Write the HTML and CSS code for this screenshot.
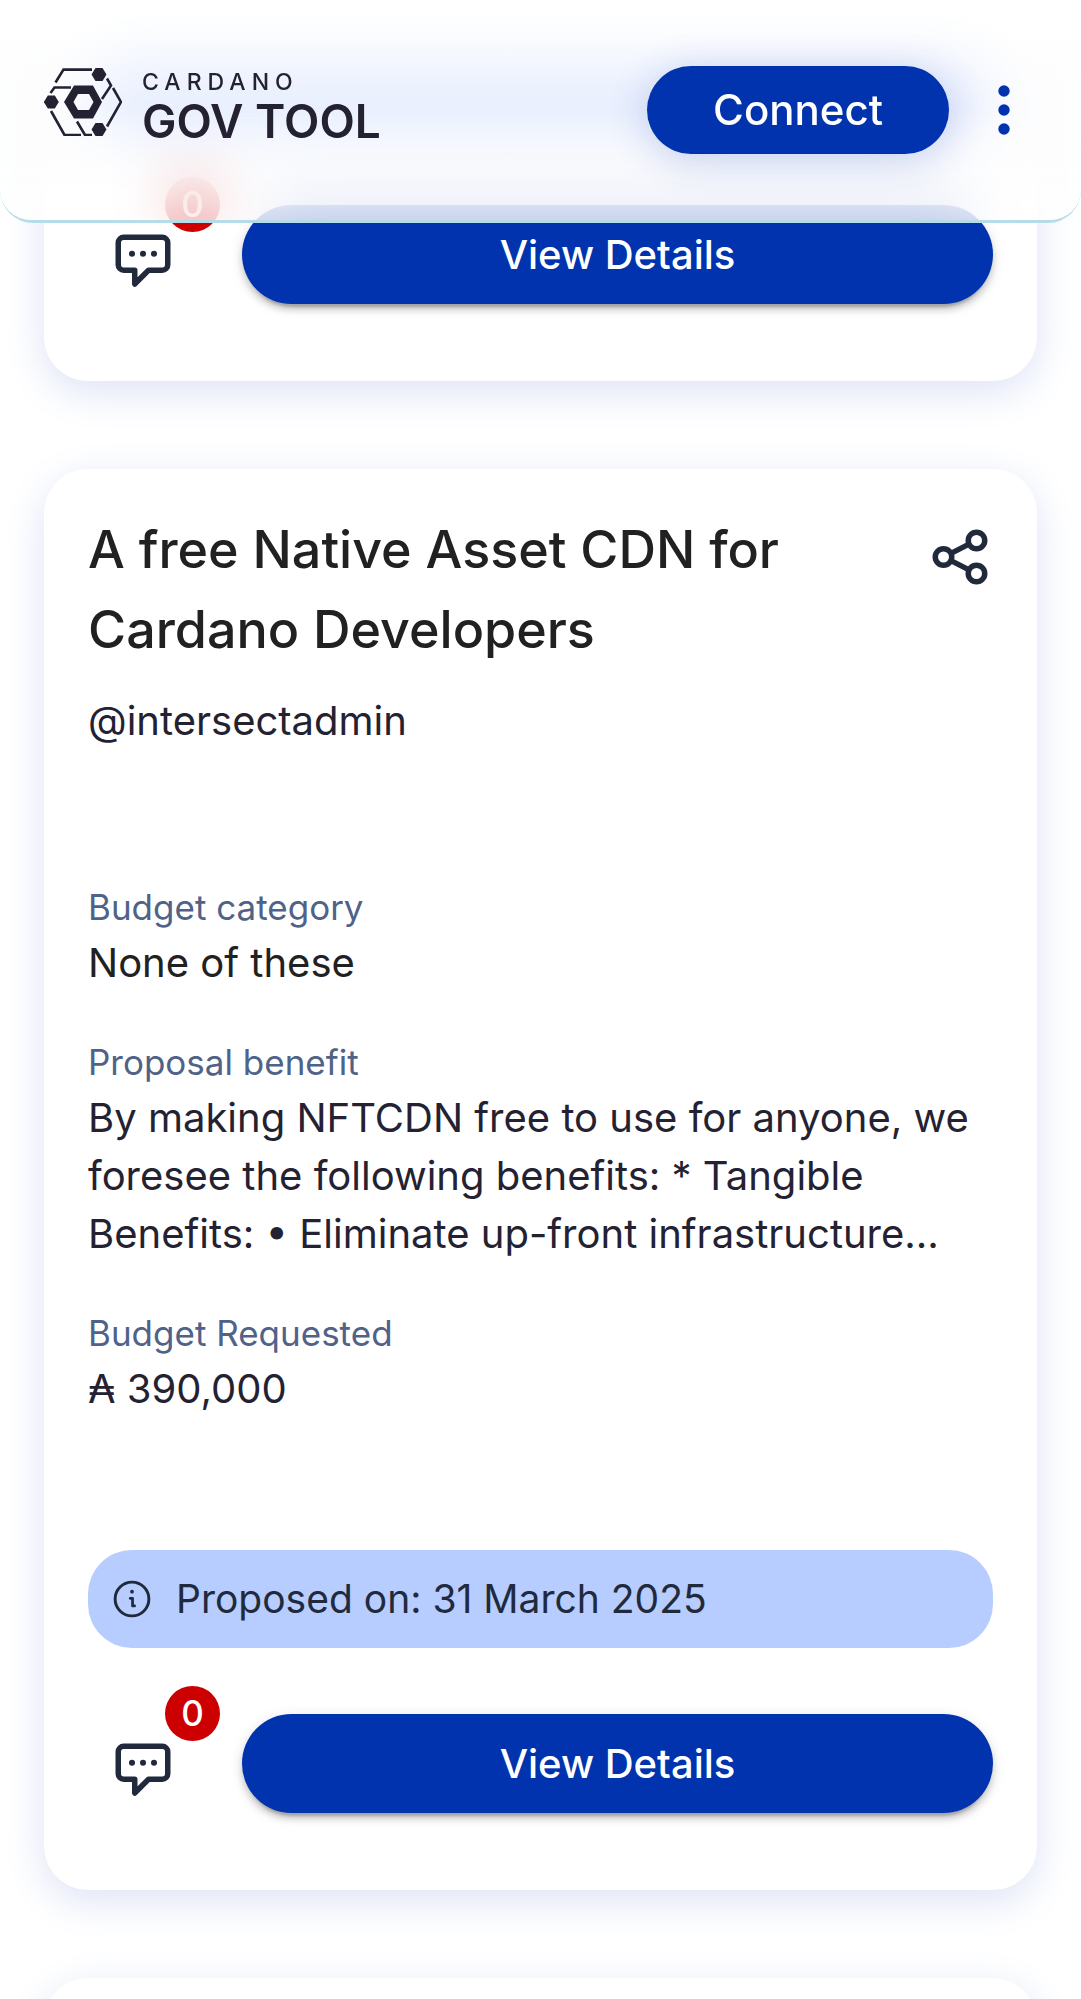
FILE: index.html
```html
<!DOCTYPE html>
<html lang="en">
<head>
<meta charset="utf-8">
<meta name="viewport" content="width=device-width, initial-scale=1">
<title>Cardano GovTool</title>
<link rel="stylesheet" href="styles.css">
</head>
<body>
<svg class="sprite" aria-hidden="true">
  <symbol id="icon-comment" viewBox="0 0 24 24">
    <path d="M9 15H5a2 2 0 0 1-2-2V5a2 2 0 0 1 2-2h14a2 2 0 0 1 2 2v8a2 2 0 0 1-2 2h-5l-5 5z" fill="none" stroke="currentColor" stroke-width="2" stroke-linejoin="round"/>
    <g fill="currentColor"><circle cx="8" cy="9" r="1.1"/><circle cx="12" cy="9" r="1.1"/><circle cx="16" cy="9" r="1.1"/></g>
  </symbol>
  <symbol id="icon-info" viewBox="0 0 24 24">
    <circle cx="12" cy="12" r="9.2" fill="none" stroke="currentColor" stroke-width="1.6"/>
    <path d="M11 11.6h1.3v4.2h1.1" fill="none" stroke="currentColor" stroke-width="1.5" stroke-linecap="round" stroke-linejoin="round"/>
    <circle cx="12" cy="8" r="1" fill="currentColor"/>
  </symbol>
</svg>

<header class="topbar">
  <a class="logo" href="#">
    <svg class="logo-mark" viewBox="0 0 78 68" aria-hidden="true">
      <g fill="none" stroke="currentColor" stroke-width="2.6">
        <path d="M11.5 14.5 19.5 1.6H48"/>
        <path d="M63 10.500 67 17.500 58 31"/>
        <path d="M69 20 77 34 63 58.500"/>
        <path d="M6.500 25 10.500 19.500H27"/>
        <path d="M7 43 20.500 67H37"/>
        <path d="M33 53.500 41 67H48"/>
      </g>
      <g fill="currentColor">
        <path d="M51.500 0h7l4 6.500-4 6.500h-7l-4-6.500z"/>
        <path d="M51.500 55h7l4 6.500-4 6.500h-7l-4-6.500z"/>
        <path d="M3.800 27.500h7l4 6.500-4 6.500h-7l-4-6.500z"/>
        <path fill-rule="evenodd" d="M30 17.500h19L58 34l-9 16.500H30L20 34zM34 26 29.500 34 34 42h11l4.500-8L45 26z"/>
      </g>
    </svg>
    <span class="wordmark">
      <span class="wordmark-top">CARDANO</span>
      <span class="wordmark-main">GOV TOOL</span>
    </span>
  </a>
  <button class="connect" type="button">Connect</button>
  <button class="menu" type="button" aria-label="Menu">
    <svg class="menu-icon" viewBox="0 0 66 66" aria-hidden="true" fill="currentColor"><circle cx="33" cy="14" r="5.700"/><circle cx="33" cy="33" r="5.700"/><circle cx="33" cy="52" r="5.700"/></svg>
  </button>
</header>

<main class="list">
  <article class="card card-first">
    <div class="notice"></div>
    <div class="actions">
      <button class="comments" type="button" aria-label="Comments"><svg class="icon" aria-hidden="true"><use href="#icon-comment"/></svg><span class="badge">0</span></button>
      <button class="details" type="button">View Details</button>
    </div>
  </article>

  <article class="card">
    <div class="card-head">
      <h2 class="title">A free Native Asset CDN for<br>Cardano Developers</h2>
      <button class="share" type="button" aria-label="Share">
        <svg class="icon" viewBox="0 0 24 24" aria-hidden="true" fill="none" stroke="currentColor" stroke-width="2"><circle cx="6" cy="12" r="3"/><circle cx="18" cy="6" r="3"/><circle cx="18" cy="18" r="3"/><path d="m8.700 10.700 6.600-3.400M8.700 13.300l6.600 3.400"/></svg>
      </button>
    </div>
    <p class="author">@intersectadmin</p>
    <dl class="facts">
      <div class="fact"><dt class="label">Budget category</dt><dd class="value value-strong">None of these</dd></div>
      <div class="fact"><dt class="label">Proposal benefit</dt><dd class="value">By making NFTCDN free to use for anyone, we<br>foresee the following benefits: * Tangible<br>Benefits: • Eliminate up-front infrastructure…</dd></div>
      <div class="fact"><dt class="label">Budget Requested</dt><dd class="value">₳ 390,000</dd></div>
    </dl>
    <p class="notice"><svg class="notice-icon" aria-hidden="true"><use href="#icon-info"/></svg>Proposed on: 31 March 2025</p>
    <div class="actions">
      <button class="comments" type="button" aria-label="Comments"><svg class="icon" aria-hidden="true"><use href="#icon-comment"/></svg><span class="badge">0</span></button>
      <button class="details" type="button">View Details</button>
    </div>
  </article>

  <article class="card"></article>
</main>
</body>
</html>
```
FILE: styles.css
```css
* {
  box-sizing: border-box;
}

body {
  margin: 0;
  background: #fff;
  color: #242232;
  font-family: Inter, "Open Sans", "DejaVu Sans", sans-serif;
  font-size: 40px;
  line-height: 58px;
}

button {
  padding: 0;
  border: 0;
  background: none;
  color: inherit;
  font: inherit;
  cursor: pointer;
}

h2,
p,
dl,
dd {
  margin: 0;
}

.sprite {
  position: absolute;
  width: 0;
  height: 0;
}

.icon {
  display: block;
  width: 66px;
  height: 66px;
}

/* Top bar */
.topbar {
  position: fixed;
  z-index: 10;
  top: 0;
  left: 0;
  right: 0;
  display: flex;
  align-items: center;
  height: 223px;
  padding: 0 44px;
  border-bottom: 3px solid #b5dce8;
  border-radius: 0 0 33px 33px;
}

.topbar::before {
  content: "";
  position: absolute;
  z-index: -1;
  inset: 0;
  border-radius: 0 0 30px 30px;
  background: linear-gradient(rgba(255, 255, 255, 0.95), rgba(253, 253, 253, 0.68) 50%, rgba(255, 255, 255, 0.8));
  backdrop-filter: blur(28px);
  -webkit-mask-image: linear-gradient(#000 60%, rgba(0, 0, 0, 0.9));
  mask-image: linear-gradient(#000 60%, rgba(0, 0, 0, 0.9));
}

.logo {
  display: flex;
  align-items: flex-start;
  gap: 20px;
  margin-right: auto;
  padding-bottom: 6px;
  color: #242232;
  text-decoration: none;
}

.logo-mark {
  width: 78px;
  height: 68px;
}

.wordmark {
  display: grid;
  white-space: nowrap;
}

.wordmark-top {
  font-size: 23px;
  font-weight: 500;
  line-height: 28px;
  letter-spacing: 6px;
}

.wordmark-main {
  font-size: 46px;
  font-weight: 600;
  line-height: 50px;
}

.connect {
  height: 88px;
  padding: 0 66px;
  border-radius: 44px;
  background: #0033ad;
  box-shadow: 0 6px 42px rgba(0, 51, 173, 0.2);
  color: #fff;
  font-size: 42px;
  font-weight: 500;
}

.menu {
  margin-left: 22px;
  color: #0033ad;
}

.menu-icon {
  display: block;
  width: 66px;
  height: 66px;
}

/* Proposal cards */
.list {
  display: flex;
  flex-direction: column;
  gap: 88px;
  height: 100vh;
  padding: 0 44px;
  overflow-y: auto;
  scrollbar-width: none;
}

.card {
  flex: none;
  padding: 41px 44px 66px;
  border-radius: 44px;
  background: #fff;
  box-shadow: 0 11px 42px #dde3f5;
}

.card-first {
  border-radius: 0 0 44px 44px;
}

.card-head {
  display: flex;
  align-items: flex-start;
  justify-content: space-between;
}

.title {
  color: #212121;
  font-size: 52px;
  font-weight: 500;
  line-height: 80px;
}

.share {
  margin-top: 14px;
  color: #212a3d;
}

.author {
  margin-top: 22px;
}

.facts {
  display: grid;
  gap: 45px;
  margin: 132px 0;
}

.label {
  color: #506288;
  font-size: 35px;
  line-height: 50px;
}

.value {
  margin-top: 2px;
}

.value-strong {
  color: #212121;
}

.notice {
  display: flex;
  align-items: center;
  gap: 22px;
  min-height: 98px;
  padding: 20px 22px;
  border-radius: 44px;
  background: #b7ccff;
  color: #212a3d;
  font-size: 39px;
}

.notice-icon {
  flex: none;
  width: 44px;
  height: 44px;
}

.actions {
  display: flex;
  gap: 44px;
  margin-top: 66px;
}

.comments {
  position: relative;
  padding: 24px 22px 20px;
  color: #212a3d;
}

.badge {
  position: absolute;
  top: -28px;
  right: -22px;
  width: 55px;
  height: 55px;
  border-radius: 50%;
  background: #c00;
  color: #fff;
  font-size: 35px;
  font-weight: 500;
  line-height: 55px;
  text-align: center;
}

.details {
  flex: 1;
  height: 99px;
  border-radius: 50px;
  background: #0033ad;
  box-shadow: 0 8px 3px -5px rgba(0, 0, 0, 0.2), 0 6px 6px rgba(0, 0, 0, 0.14), 0 3px 14px rgba(0, 0, 0, 0.12);
  color: #fff;
  font-size: 40px;
  font-weight: 500;
}
```
